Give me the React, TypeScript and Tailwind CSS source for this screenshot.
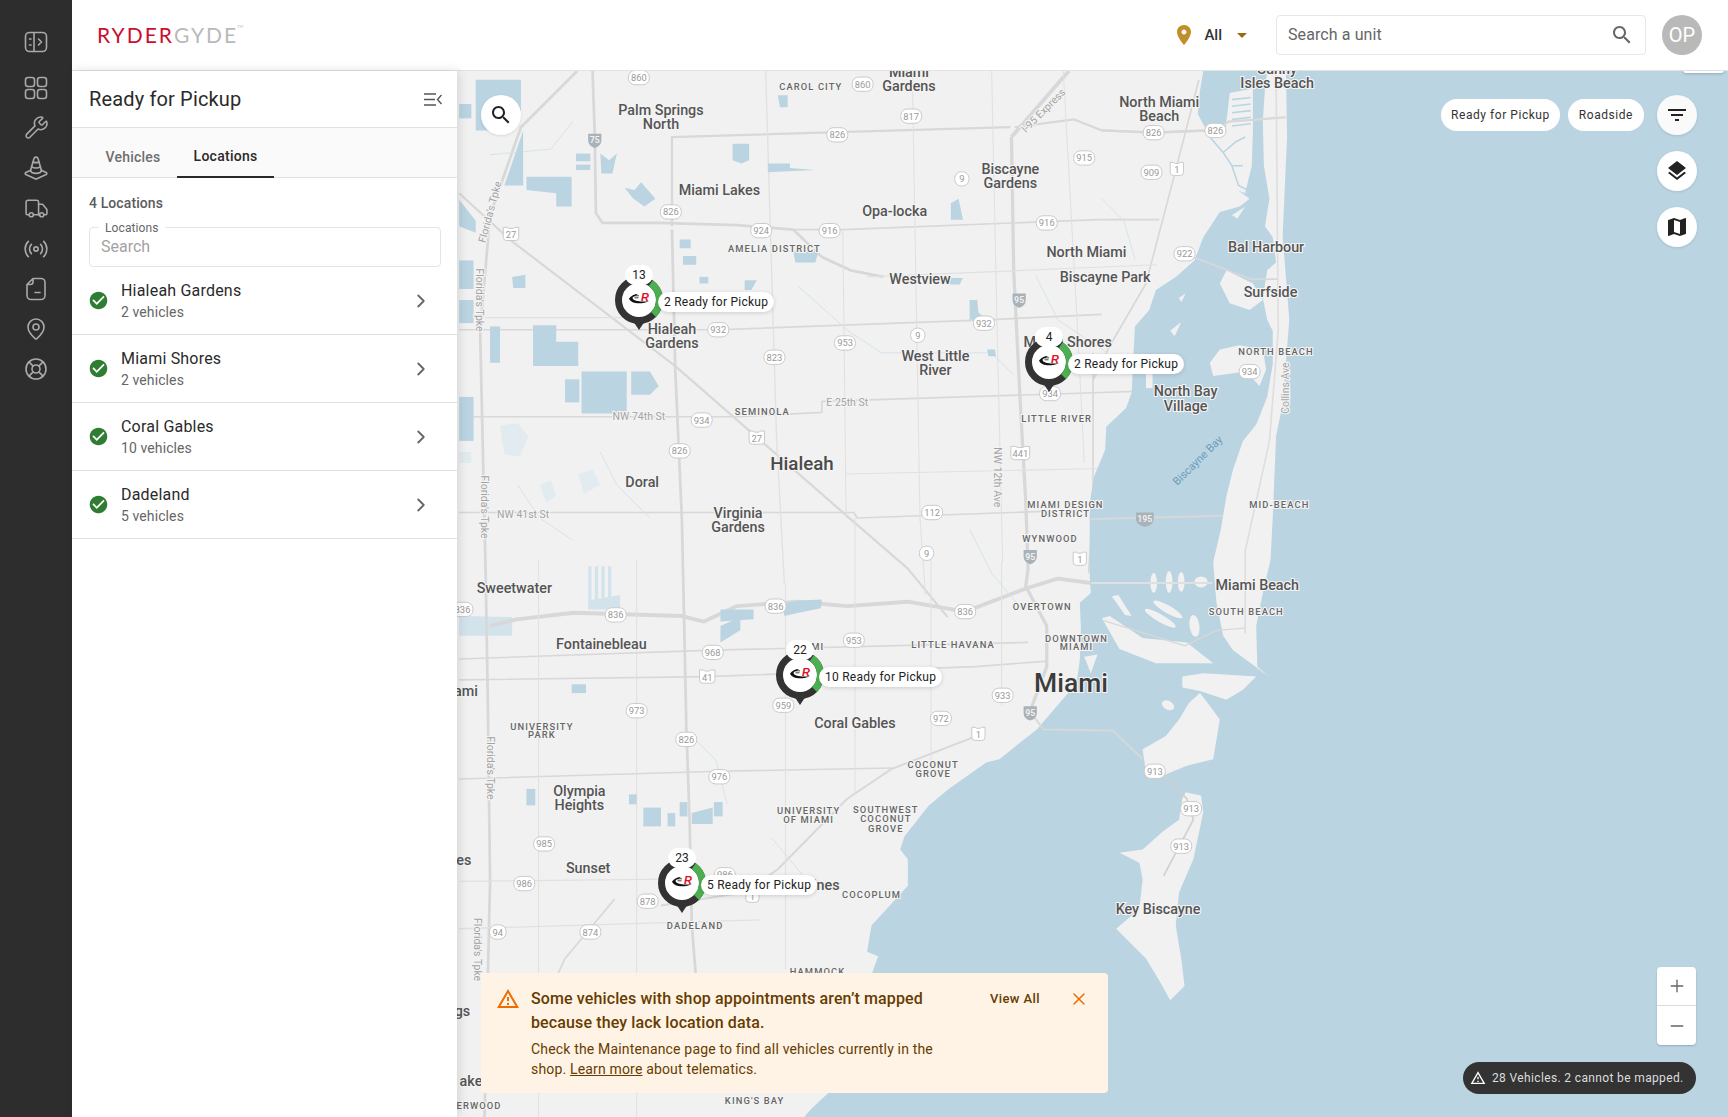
import React from 'react';
import { Wrench, TrafficCone, Truck, Radio, MapPin, LifeBuoy, ChevronRight, Plus, Minus, X } from 'lucide-react';

const SEARCH = 'M15.5 14h-.79l-.28-.27C15.41 12.59 16 11.11 16 9.5 16 5.91 13.09 3 9.5 3S3 5.91 3 9.5 5.91 16 9.5 16c1.61 0 3.09-.59 4.23-1.57l.27.28v.79l5 4.99L20.49 19l-4.99-5zm-6 0C7.01 14 5 11.99 5 9.5S7.01 5 9.5 5 14 7.01 14 9.5 11.99 14 9.5 14z';
const WARNING = 'M1 21h22L12 2 1 21zm3.47-2L12 5.99 19.53 19H4.47zM11 16h2v2h-2zm0-6h2v4h-2z';

function Glyph({ d, size = 24, className }: { d: string; size?: number; className?: string }) {
  return (
    <svg width={size} height={size} viewBox="0 0 24 24" fill="currentColor" className={className}>
      <path d={d} fillRule="evenodd" />
    </svg>
  );
}

// Rail icons lucide does not have
function PanelToggleIcon() {
  return (
    <svg width="24" height="24" viewBox="0 0 24 24" fill="none" stroke="currentColor" strokeWidth="1.6" strokeLinecap="round" strokeLinejoin="round">
      <rect x="1.5" y="2.5" width="21" height="19" rx="4" />
      <path d="M10 2.5v19M14.5 9l3 3-3 3M5.5 9h1.5M5.5 15h1.5" />
    </svg>
  );
}

function GridIcon() {
  return (
    <svg width="24" height="24" viewBox="0 0 24 24" fill="none" stroke="currentColor" strokeWidth="1.6">
      <rect x="1.5" y="1.5" width="9" height="9" rx="2.5" />
      <rect x="13.5" y="1.5" width="9" height="9" rx="2.5" />
      <rect x="1.5" y="13.5" width="9" height="9" rx="2.5" />
      <rect x="13.5" y="13.5" width="9" height="9" rx="2.5" />
    </svg>
  );
}

function NotesIcon() {
  return (
    <svg width="24" height="24" viewBox="0 0 24 24" fill="none" stroke="currentColor" strokeWidth="1.6" strokeLinecap="round" strokeLinejoin="round">
      <path d="M9 1.5h8a4 4 0 0 1 4 4v13a4 4 0 0 1-4 4H7a4 4 0 0 1-4-4V7.500zM9 1.500V5a2.500 2.500 0 0 1-2.500 2.500H3M11 15.500h5" />
    </svg>
  );
}

const railIcons = [
  { key: 'dash', node: <GridIcon />, cls: 'mt-[22px]' },
  { key: 'wrench', node: <Wrench size={25} strokeWidth={1.5} />, cls: 'mt-[15px]' },
  { key: 'cone', node: <TrafficCone size={26} strokeWidth={1.5} />, cls: 'mt-[15px]' },
  { key: 'truck', node: <Truck size={25} strokeWidth={1.5} />, cls: 'mt-[15px]' },
  { key: 'radio', node: <Radio size={26} strokeWidth={1.5} />, cls: 'mt-[15px]' },
  { key: 'notes', node: <NotesIcon />, cls: 'mt-[15px]' },
  { key: 'pin', node: <MapPin size={24} strokeWidth={1.6} />, cls: 'mt-[16px]' },
  { key: 'help', node: <LifeBuoy size={24} strokeWidth={1.6} />, cls: 'mt-[16px]' },
];

const locations = [
  { name: 'Hialeah Gardens', count: '2 vehicles' },
  { name: 'Miami Shores', count: '2 vehicles' },
  { name: 'Coral Gables', count: '10 vehicles' },
  { name: 'Dadeland', count: '5 vehicles' },
];

// Map geometry, all in the svg's own 1153x950 space
const bay = '1092,64 1089,82 1087,103 1095,118 1107,136 1119,157 1123,172 1134,180 1125,187 1107,192 1092,215 1084,236 1067,251 1049,263 1043,281 1030,296 1028,335 1027,356 1022,370 1004,387 1003,408 993,432 989,456 989,516 989,523 990,538 980,547 981,571 980,599 977,620 959,641 941,662 922,677 907,689 895,692 861,716 843,731 821,759 817,771 824,780 824,804 791,840 787,864 797,868 775,930 752,992 736,1007 730,1014 1568,1014 1568,64';

const islands = [
  '1167,64 1168,124 1164,214 1170,290 1164,366 1158,396 1155,470 1153,508 1146,538 1140,568 1141,605 1153,615 1119,590 1110,577 1104,547 1101,510 1108,480 1113,450 1119,426 1128,400 1140,385 1150,360 1155,330 1155,300 1150,290 1146,270 1150,245 1158,238 1155,215 1148,205 1152,180 1147,150 1146,110 1148,80 1150,64',
  '1092,122 1112,118 1116,84 1137,80 1137,118 1136,150 1130,175 1122,172 1107,136',
  '1107,257 1113,245 1137,257 1146,272 1134,281 1116,275',
  '1098,329 1107,317 1125,313 1146,317 1149,335 1143,350 1131,337 1101,341',
  '1000,561 1007,559 1037,579 1077,583 1101,602 1049,602 1016,589',
  '1009,541 1015,540 1027,559 1021,558',
  '984,596 996,594 990,611',
  '1073,614 1092,611 1140,614 1128,626 1113,635 1089,627 1073,624',
  '1089,629 1096,638 1107,653 1104,671 1101,689 1077,695 1055,704 1040,701 1037,680 1058,668 1070,653 1079,638',
  '1076,719 1090,722 1092,737 1083,780 1070,810 1067,840 1072,870 1075,895 1062,908 1052,890 1040,870 1013,843 1034,825 1037,798 1034,783 1016,774 1037,771 1055,755 1070,744 1073,725',
  '1040,330 1046,330 1046,352 1040,352',
  '1062,300 1072,292 1066,305',
  '1070,270 1076,266 1072,274',
  '1118,195 1130,187 1123,198',
];

const islets: [number, number, number, number, number][] = [
  [1047, 529, 3, 9, 0],
  [1061, 528, 3, 10, 0],
  [1072, 528, 3, 9, 0],
  [1090, 528, 6, 5, 0],
  [1060, 553, 15, 3.5, 30],
  [1053, 561, 16, 3.5, 30],
  [1084, 568, 4.5, 10, -8],
  [1060, 640, 6, 4, 30],
];

const ponds = [
  '432,72 473,72 473,100 455,118 432,118',
  '417,94 428,94 428,107 417,107',
  '475,118 475,168 458,168',
  '478,160 503,160 519,160 519,187 505,187 505,175 478,172',
  '417,181 432,200 432,211 417,205',
  '417,236 430,236 430,262 417,262',
  '417,272 430,272 430,293 417,293',
  '465,251 477,249 477,261 466,261',
  '445,296 454,296 454,329 445,329',
  '484,295 505,295 505,310 525,310 525,332 484,332',
  '528,337 569,337 569,375 528,375',
  '573,337 590,337 598,350 590,358 573,358',
  '513,344 526,344 526,365 513,365',
  '417,360 430,360 430,400 417,400',
  '523,139 536,139 536,146 523,146',
  '523,149 536,149 536,154 523,154',
  '545,139 553,145 560,139 556,157 546,157',
  '567,170 576,172 582,165 595,180 585,187 575,180',
  '665,130 680,130 680,145 673,148 665,145',
  '697,148 717,148 717,152 740,154 697,156',
  '706,86 715,86 715,97 708,97',
  '720,228 743,228 740,238 722,238',
  '863,184 870,180 874,199 863,199',
  '880,272 887,272 888,283 895,290 880,290',
  '896,317 903,317 904,323 897,323',
  '861,252 874,252 871,258 862,258',
  '617,217 627,217 627,225 617,225',
  '620,232 632,232 632,240 620,240',
  '635,251 643,251 643,257 635,257',
  '676,254 687,254 682,263 676,263',
  '654,553 684,553 684,562 654,564',
  '654,568 672,560 672,572 654,583',
  '710,548 725,545 746,544 745,552 725,556 712,559',
  '584,733 600,733 600,750 584,750',
  '606,738 613,738 613,750 606,750',
  '617,728 624,728 624,741 617,741',
  '628,738 647,733 647,748 628,748',
  '648,728 656,728 656,741 648,741',
  '571,721 578,721 578,730 571,730',
  '478,716 486,716 486,731 478,731',
  '519,621 532,621 532,629 519,629',
];

const canalBlocks = [
  '417,559 465,560 465,577 417,577',
  '534,514 537,514 537,545 534,545',
  '540,514 543,514 543,545 540,545',
  '546,514 549,514 549,545 546,545',
  '552,514 555,514 555,545 552,545',
  '534,545 563,540 563,553 534,553',
];

const faintWater = [
  '454,386 470,384 480,396 472,414 458,412',
  '417,410 428,410 428,420 417,420',
  '490,440 500,436 505,450 496,456',
  '525,430 538,426 545,440 530,448',
];

const roads: [string, number][] = [
  ['524,64 473,115 445,195 436,300 441,520 443,640 445,800 440,1014', 2.5],
  ['417,175 464,218 613,332 772,471 824,516 860,560', 2],
  ['538,64 540,124 541,193 547,202 598,202 669,204 720,208 746,233 772,245 802,251', 2.5],
  ['610,208 613,335 619,471 621,562 623,659 626,744 628,840 632,890', 2.5],
  ['610,205 610,124 917,115', 2],
  ['921,115 975,108 1000,118 1047,120 1092,118', 2],
  ['918,124 920,245 926,366 931,456 933,516 931,532 950,568 950,605 935,645', 3],
  ['918,124 970,64', 3.5],
  ['1088,72 1067,154 1040,257 1007,314 992,345', 1.5],
  ['992,320 992,456 988,520', 1.5],
  ['417,299 652,299 895,290 1000,285', 1.5],
  ['720,208 765,208 997,199 1052,199', 1.5],
  ['417,378 670,378 746,374 746,364 1000,356 1030,355', 1.5],
  ['417,465 775,465 778,470 1000,462', 1.5],
  ['445,568 469,562 521,556 619,559 639,564 669,550 724,546 769,550 824,546 876,555 931,534 960,525 990,529', 3.5],
  ['417,598 648,590 933,583', 1.5],
  ['417,617 642,614 885,605 950,600', 1.5],
  ['417,707 653,700 810,697', 1.5],
  ['889,667 809,698 769,725 706,789 676,810 600,822', 1.8],
  ['558,816 513,870 490,920', 1.5],
  ['417,800 700,797', 1.2],
  ['417,843 690,835', 1.2],
  ['768,430 1000,425', 1],
  ['440,288 565,288', 1],
  ['787,251 1050,240', 1],
  ['489,508 489,1014', 1],
  ['578,508 578,1014', 1],
  ['713,530 713,880', 1],
  ['776,470 776,720', 1],
  ['845,505 845,690', 1],
  ['909,510 909,640', 1],
  ['695,64 705,400 712,530', 1.2],
  ['765,208 768,470', 1],
  ['828,64 835,470 840,540', 1],
  ['900,64 905,300 910,510', 1],
  ['965,64 978,300 984,420', 1],
];

const canals = [
  '445,140 500,135 520,110',
  '725,260 770,300 800,320 900,320 920,340',
  '940,250 960,290 1005,320',
  '880,480 900,520 925,550',
  '620,660 650,690 660,730',
  '700,760 725,790 740,810',
  '1000,180 1020,200 1030,235',
  '545,410 560,440 590,470',
  '470,440 490,470 520,490',
];

// Waterways that cross the islands north of Bal Harbour
const veins = [
  '1118,90 1135,88', '1118,96 1135,94', '1118,102 1135,100', '1118,108 1135,106', '1118,114 1135,112',
  '1098,124 1110,138 1122,128 1130,124',
  '1110,138 1118,150 1128,150',
  '1118,150 1124,168 1132,172',
];

type MapLabel = { t: string; x: number; y: number; k: 'city' | 'hood' | 'road'; r?: number };

const labels: MapLabel[] = [
  { t: 'Miami', x: 825, y: 65, k: 'city' },
  { t: 'Gardens', x: 825, y: 78, k: 'city' },
  { t: 'CAROL CITY', x: 736, y: 78, k: 'hood' },
  { t: 'Palm Springs', x: 600, y: 99, k: 'city' },
  { t: 'North', x: 600, y: 112, k: 'city' },
  { t: 'North Miami', x: 1052, y: 92, k: 'city' },
  { t: 'Beach', x: 1052, y: 105, k: 'city' },
  { t: 'Sunny', x: 1159, y: 62, k: 'city' },
  { t: 'Isles Beach', x: 1159, y: 75, k: 'city' },
  { t: 'Miami Lakes', x: 653, y: 172, k: 'city' },
  { t: 'Biscayne', x: 917, y: 153, k: 'city' },
  { t: 'Gardens', x: 917, y: 166, k: 'city' },
  { t: 'Opa-locka', x: 812, y: 191, k: 'city' },
  { t: 'AMELIA DISTRICT', x: 703, y: 225, k: 'hood' },
  { t: 'North Miami', x: 986, y: 228, k: 'city' },
  { t: 'Bal Harbour', x: 1149, y: 224, k: 'city' },
  { t: 'Westview', x: 835, y: 253, k: 'city' },
  { t: 'Biscayne Park', x: 1003, y: 251, k: 'city' },
  { t: 'Surfside', x: 1153, y: 265, k: 'city' },
  { t: 'Hialeah', x: 610, y: 298, k: 'city' },
  { t: 'Gardens', x: 610, y: 311, k: 'city' },
  { t: 'West Little', x: 849, y: 323, k: 'city' },
  { t: 'River', x: 849, y: 336, k: 'city' },
  { t: 'Miami Shores', x: 969, y: 310, k: 'city' },
  { t: 'NORTH BEACH', x: 1158, y: 319, k: 'hood' },
  { t: 'North Bay', x: 1076, y: 355, k: 'city' },
  { t: 'Village', x: 1076, y: 368, k: 'city' },
  { t: 'SEMINOLA', x: 692, y: 373, k: 'hood' },
  { t: 'LITTLE RIVER', x: 959, y: 380, k: 'hood' },
  { t: 'Doral', x: 583, y: 437, k: 'city' },
  { t: 'Virginia', x: 670, y: 465, k: 'city' },
  { t: 'Gardens', x: 670, y: 478, k: 'city' },
  { t: 'MIAMI DESIGN', x: 967, y: 458, k: 'hood' },
  { t: 'DISTRICT', x: 967, y: 466, k: 'hood' },
  { t: 'MID-BEACH', x: 1161, y: 458, k: 'hood' },
  { t: 'WYNWOOD', x: 953, y: 489, k: 'hood' },
  { t: 'Miami Beach', x: 1141, y: 531, k: 'city' },
  { t: 'Sweetwater', x: 467, y: 534, k: 'city' },
  { t: 'OVERTOWN', x: 946, y: 550, k: 'hood' },
  { t: 'SOUTH BEACH', x: 1131, y: 555, k: 'hood' },
  { t: 'Fontainebleau', x: 546, y: 584, k: 'city' },
  { t: 'MIAMI', x: 733, y: 587, k: 'hood' },
  { t: 'LITTLE HAVANA', x: 865, y: 585, k: 'hood' },
  { t: 'DOWNTOWN', x: 977, y: 579, k: 'hood' },
  { t: 'MIAMI', x: 977, y: 587, k: 'hood' },
  { t: 'Coral Gables', x: 776, y: 656, k: 'city' },
  { t: 'UNIVERSITY', x: 492, y: 659, k: 'hood' },
  { t: 'PARK', x: 492, y: 667, k: 'hood' },
  { t: 'COCONUT', x: 847, y: 694, k: 'hood' },
  { t: 'GROVE', x: 847, y: 702, k: 'hood' },
  { t: 'Olympia', x: 526, y: 718, k: 'city' },
  { t: 'Heights', x: 526, y: 731, k: 'city' },
  { t: 'UNIVERSITY', x: 734, y: 736, k: 'hood' },
  { t: 'OF MIAMI', x: 734, y: 744, k: 'hood' },
  { t: 'SOUTHWEST', x: 804, y: 735, k: 'hood' },
  { t: 'COCONUT', x: 804, y: 743, k: 'hood' },
  { t: 'GROVE', x: 804, y: 752, k: 'hood' },
  { t: 'Sunset', x: 534, y: 788, k: 'city' },
  { t: 'COCOPLUM', x: 791, y: 812, k: 'hood' },
  { t: 'DADELAND', x: 631, y: 840, k: 'hood' },
  { t: 'Key Biscayne', x: 1051, y: 825, k: 'city' },
  { t: 'HAMMOCK', x: 742, y: 882, k: 'hood' },
  { t: "KING'S BAY", x: 685, y: 999, k: 'hood' },
  { t: 'ERWOOD', x: 435, y: 1004, k: 'hood' },
  { t: 'NW 74th St', x: 580, y: 378, k: 'road' },
  { t: 'E 25th St', x: 769, y: 365, k: 'road' },
  { t: 'NW 41st St', x: 475, y: 467, k: 'road' },
  { t: "Florida's Tpke", x: 445, y: 192, k: 'road', r: -75 },
  { t: "Florida's Tpke", x: 435, y: 272, k: 'road', r: 90 },
  { t: "Florida's Tpke", x: 440, y: 460, k: 'road', r: 90 },
  { t: "Florida's Tpke", x: 445, y: 697, k: 'road', r: 90 },
  { t: "Florida's Tpke", x: 434, y: 862, k: 'road', r: 90 },
  { t: 'NW 12th Ave', x: 905, y: 433, k: 'road', r: 90 },
  { t: 'Collins Ave', x: 1167, y: 352, k: 'road', r: -90 },
  { t: 'I-95 Express', x: 947, y: 100, k: 'road', r: -45 },
];

const labelCls = {
  city: "font-['Roboto',sans-serif] text-[13px] font-medium fill-[#555555]",
  hood: "font-['Roboto',sans-serif] text-[8.5px] font-medium tracking-[1px] fill-[#666666]",
  road: "font-['Roboto',sans-serif] text-[9.5px] fill-[#a3a3a3]",
};

const ovalShields: [string, number, number][] = [
  ['860', 580, 70], ['860', 783, 76], ['817', 827, 105], ['826', 760, 122], ['826', 1047, 120], ['826', 1103, 118],
  ['915', 984, 143], ['909', 1045, 156], ['9', 873, 162], ['826', 609, 192], ['924', 691, 209], ['916', 753, 209],
  ['916', 950, 202], ['922', 1075, 230], ['932', 652, 299], ['953', 767, 311], ['9', 833, 304], ['932', 893, 293],
  ['823', 703, 324], ['934', 1134, 337], ['934', 953, 357], ['934', 637, 381], ['826', 617, 409], ['112', 846, 465],
  ['9', 841, 502], ['836', 420, 553], ['836', 559, 558], ['836', 704, 550], ['836', 876, 555], ['968', 647, 592],
  ['953', 775, 581], ['973', 578, 645], ['959', 711, 640], ['933', 910, 631], ['972', 854, 652], ['826', 623, 671],
  ['976', 653, 705], ['913', 1048, 700], ['913', 1081, 734], ['913', 1072, 768], ['985', 494, 766], ['986', 476, 802],
  ['878', 588, 818], ['986', 658, 794], ['94', 452, 846], ['874', 536, 846],
];

const usShields: [string, number, number][] = [
  ['27', 464, 212], ['27', 687, 397], ['1', 1068, 153], ['441', 926, 411], ['1', 980, 507], ['41', 642, 614], ['1', 888, 666], ['1', 683, 813],
];

const interstates: [string, number, number][] = [
  ['75', 540, 127], ['95', 925, 272], ['195', 1039, 471], ['95', 935, 505], ['95', 935, 647],
];

function MapCanvas() {
  const haloCls = '[paint-order:stroke] stroke-[#f4f4f4] stroke-[2px]';
  return (
    <svg viewBox="415 64 1153 950" preserveAspectRatio="none" className="absolute inset-0 h-full w-full">
      <rect x="415" y="64" width="1153" height="950" fill="#f1f1f1" />
      {faintWater.map((pts, i) => (
        <polygon key={`f-${i}`} points={pts} fill="#e1ebf0" />
      ))}
      {canalBlocks.map((pts, i) => (
        <polygon key={`w-${i}`} points={pts} fill="#d3e3ec" />
      ))}
      {roads.map(([pts, w], i) => (
        <polyline key={`r-${i}`} points={pts} fill="none" stroke={w > 1.4 ? '#d8d8d8' : '#e1e1e1'} strokeWidth={w} strokeLinejoin="round" />
      ))}
      {canals.map((pts, i) => (
        <polyline key={`c-${i}`} points={pts} fill="none" stroke="#d3e3ec" strokeWidth="0.9" />
      ))}
      {ponds.map((pts, i) => (
        <polygon key={`p-${i}`} points={pts} fill="#bbd4e2" />
      ))}
      <polygon points={bay} fill="#bbd4e2" />
      {islands.map((pts, i) => (
        <polygon key={`i-${i}`} points={pts} fill="#f1f1f1" />
      ))}
      {islets.map(([cx, cy, rx, ry, rot], i) => (
        <ellipse key={`e-${i}`} cx={cx} cy={cy} rx={rx} ry={ry} fill="#f1f1f1" transform={`rotate(${rot} ${cx} ${cy})`} />
      ))}
      {veins.map((pts, i) => (
        <polyline key={`v-${i}`} points={pts} fill="none" stroke="#bbd4e2" strokeWidth="1.4" />
      ))}
      <polyline points="1000,118 1047,120 1103,118 1115,110 1167,106" fill="none" stroke="#d8d8d8" strokeWidth="2" />
      <polyline points="990,471 1110,468" fill="none" stroke="#d8d8d8" strokeWidth="1.8" />
      <polyline points="990,529 1100,529" fill="none" stroke="#e0e0e0" strokeWidth="2" />
      <polyline points="935,646 947,662 1010,663 1037,689" fill="none" stroke="#d8d8d8" strokeWidth="1.6" />
      <polyline points="1057,704 1077,725 1083,744 1056,795" fill="none" stroke="#d0d0d0" strokeWidth="1.5" />
      <polyline points="1075,230 1135,253 1160,253" fill="none" stroke="#d8d8d8" strokeWidth="1.5" />
      <polyline points="1001,563 1075,586 1104,572 1130,570" fill="none" stroke="#d8d8d8" strokeWidth="1.2" />
      <polyline points="1158,64 1160,300 1152,400 1130,500 1130,575" fill="none" stroke="#dedede" strokeWidth="1.5" />

      {labels.map((l, i) => (
        <text
          key={`l-${i}`}
          x={l.x}
          y={l.y}
          textAnchor="middle"
          dominantBaseline="central"
          transform={l.r ? `rotate(${l.r} ${l.x} ${l.y})` : undefined}
          className={`${labelCls[l.k]} ${haloCls}`}
        >
          {l.t}
        </text>
      ))}
      <text x="728" y="421" textAnchor="middle" dominantBaseline="central" className={`font-['Roboto',sans-serif] text-[17px] font-medium fill-[#4a4a4a] ${haloCls}`}>Hialeah</text>
      <text x="972" y="619" textAnchor="middle" dominantBaseline="central" className={`font-['Roboto',sans-serif] text-[24px] font-medium fill-[#3c3c3c] ${haloCls}`}>Miami</text>
      <text x="1087" y="418" textAnchor="middle" dominantBaseline="central" transform="rotate(-45 1087 418)" className="font-['Roboto',sans-serif] text-[10px] fill-[#6d9cb8]">Biscayne Bay</text>
      <text x="434" y="627" textAnchor="end" dominantBaseline="central" className={`${labelCls.city} ${haloCls}`}>ami</text>
      <text x="428" y="781" textAnchor="end" dominantBaseline="central" className={`${labelCls.city} ${haloCls}`}>es</text>
      <text x="427" y="918" textAnchor="end" dominantBaseline="central" className={`${labelCls.city} ${haloCls}`}>ngs</text>
      <text x="438" y="981" textAnchor="end" dominantBaseline="central" className={`${labelCls.city} ${haloCls}`}>ake</text>
      <text x="762" y="803" textAnchor="end" dominantBaseline="central" className={`${labelCls.city} ${haloCls}`}>Pines</text>

      {ovalShields.map(([n, x, y], i) => {
        const w = n.length === 1 ? 13 : n.length === 2 ? 15 : 19;
        return (
          <g key={`o-${i}`}>
            <rect x={x - w / 2} y={y - 6.5} width={w} height="13" rx="6" fill="#ffffff" stroke="#c9c9c9" strokeWidth="0.9" />
            <text x={x} y={y} textAnchor="middle" dominantBaseline="central" className="font-['Roboto',sans-serif] text-[8.5px] fill-[#9a9a9a]">{n}</text>
          </g>
        );
      })}
      {usShields.map(([n, x, y], i) => {
        const w = n.length === 3 ? 17 : n.length === 2 ? 14 : 12;
        return (
          <g key={`u-${i}`}>
            <path d={`M${x - w / 2} ${y - 6}h${w / 4}l${w / 8} 1l${w / 4} 0l${w / 8} -1h${w / 4}v9q0 3 -3 3h${-(w - 6)}q-3 0 -3 -3z`} fill="#ffffff" stroke="#c9c9c9" strokeWidth="0.9" />
            <text x={x} y={y + 0.5} textAnchor="middle" dominantBaseline="central" className="font-['Roboto',sans-serif] text-[8.5px] fill-[#9a9a9a]">{n}</text>
          </g>
        );
      })}
      {interstates.map(([n, x, y], i) => {
        const w = n.length === 3 ? 16 : 12;
        return (
          <g key={`h-${i}`}>
            <path d={`M${x - w / 2} ${y - 6}h${w}v6q0 5 -${w / 2} 7q-${w / 2} -2 -${w / 2} -7z`} fill="#a9b2b8" />
            <text x={x} y={y} textAnchor="middle" dominantBaseline="central" className="font-['Roboto',sans-serif] text-[8px] font-bold fill-[#eeeeee]">{n}</text>
          </g>
        );
      })}
    </svg>
  );
}

function Marker({ count, label, className }: { count: string; label: string; className: string }) {
  return (
    <div className={`absolute h-[64px] w-[56px] ${className}`}>
      <svg width="56" height="64" viewBox="0 0 56 64" className="absolute left-0 top-0">
        <path d="M20 50h16l-8 12z" fill="#333333" />
        <circle cx="28" cy="32" r="20.5" fill="#ffffff" stroke="#333333" strokeWidth="7" />
        <path d="M39.76 15.21A20.5 20.5 0 0 1 42.5 46.5" fill="none" stroke="#4caf50" strokeWidth="7" />
        <path d="M18 30.500c2-3 5.500-4.500 9-4.600l-2.600 2.100c-2.300.3-3.200 1.300-2.700 2.500 1 2.800 9 3.700 16.300 2.500-5.500 3-17.500 4-20-2.500z" fill="#111111" />
        <path d="M22 27.800h6M23.500 29.800h4" stroke="#111111" strokeWidth="0.8" />
        <text x="34" y="33" textAnchor="middle" className="font-['Liberation_Sans',sans-serif] text-[11px] font-bold italic fill-[#e0102a]">R</text>
      </svg>
      <div className="absolute left-[14px] top-[-3px] flex h-[20px] w-[28px] items-center justify-center rounded-full bg-white font-['Roboto',sans-serif] text-[12px] text-[#222222]">
        {count}
      </div>
      <div className="absolute left-[47px] top-[24px] flex h-[20px] items-center whitespace-nowrap rounded-full bg-white px-[6px] font-['Roboto',sans-serif] text-[12px] tracking-[0.25px] text-[#222222] shadow-[0_1px_4px_rgba(0,0,0,0.15)]">
        {label}
      </div>
    </div>
  );
}

function RoundButton({ children, bg = 'bg-white' }: { children: React.ReactNode; bg?: string }) {
  return (
    <button className={`flex h-[40px] w-[40px] items-center justify-center rounded-full text-[#222222] shadow-[0_1px_3px_rgba(0,0,0,0.1)] ${bg}`}>
      {children}
    </button>
  );
}

export default function App() {
  return (
    <div className="flex h-[1117px] w-[1728px] overflow-hidden bg-white font-['Roboto',sans-serif] text-[#2a2a2a]">
      {/* Icon rail */}
      <aside className="flex w-[72px] flex-none flex-col items-center bg-[#2d2d2d] pt-[30px] text-[#a9a9a9]">
        <PanelToggleIcon />
        {railIcons.map((icon) => (
          <div key={icon.key} className={icon.cls}>{icon.node}</div>
        ))}
      </aside>

      <div className="flex min-w-0 flex-1 flex-col">
        {/* Top bar */}
        <header className="flex h-[71px] flex-none items-center border-b border-[#e2e2e2] bg-white">
          <div className="ml-[25px] mt-[-2px] flex items-start font-['Lato',sans-serif] text-[21px] leading-none tracking-[2px]">
            <span className="text-[#c8102e]">RYDER</span>
            <span className="text-[#b9b9b9]">GYDE</span>
            <span className="ml-[-1px] mt-[1px] text-[4px] tracking-normal text-[#b9b9b9]">TM</span>
          </div>
          <div className="ml-auto flex items-center">
            <Glyph d="M12 2C8.13 2 5 5.13 5 9c0 5.25 7 13 7 13s7-7.75 7-13c0-3.87-3.13-7-7-7zm0 9.5c-1.38 0-2.5-1.12-2.5-2.5s1.12-2.5 2.5-2.5 2.5 1.12 2.5 2.5-1.12 2.5-2.5 2.5z" className="ml-[-1px] text-[#c08f2c]" />
            <span className="ml-[8px] text-[15px] font-medium text-[#333333]">All</span>
            <span className="ml-[15px] h-0 w-0 border-x-[5px] border-t-[5px] border-x-transparent border-t-[#9a6c12]" />
            <div className="ml-[29px] flex h-[40px] w-[370px] items-center justify-between rounded border border-[#e6e6e6] pl-[11px] pr-[11px]">
              <span className="text-[16px] tracking-[0.1px] text-[#666666]">Search a unit</span>
              <Glyph d={SEARCH} className="text-[#666666]" />
            </div>
            <div className="ml-[16px] mr-[26px] flex h-[40px] w-[40px] items-center justify-center rounded-full bg-[#b9b9b9] text-[20px] text-white">OP</div>
          </div>
        </header>

        <div className="flex min-h-0 flex-1">
          {/* Left panel */}
          <section className="relative z-10 flex w-[385px] flex-none flex-col bg-white shadow-[2px_0_10px_rgba(0,0,0,0.12)]">
            <div className="flex h-[57px] flex-none items-center justify-between border-b border-[#e2e2e2] pl-[17px] pr-[15px]">
              <h1 className="text-[20px] font-normal tracking-[0.15px] text-[#2a2a2a]">Ready for Pickup</h1>
              <svg width="18" height="13" viewBox="0 0 18 13" fill="none" stroke="#555555" strokeWidth="1.4">
                <path d="M0 1h12M0 6.500h11M0 12h12M17.500 2 13.500 6.500l4 4.500" />
              </svg>
            </div>
            <div className="flex h-[50px] flex-none items-end border-b border-[#e2e2e2] bg-[#fafafa] pl-[17px] text-[14px] font-medium tracking-[0.25px]">
              <div className="flex h-[49px] w-[88px] items-center justify-center pt-[9px] text-[#6e6e6e]">Vehicles</div>
              <div className="mb-[-1px] flex h-[50px] w-[97px] items-center justify-center border-b-2 border-[#2a2a2a] pt-[9px] text-[#2a2a2a]">Locations</div>
            </div>
            <div className="px-[17px]">
              <div className="mt-[16px] text-[14px] font-medium leading-[18px] tracking-[0.1px] text-[#5c5c5c]">4 Locations</div>
              <div className="relative mt-[15px] flex h-[40px] w-[352px] items-center rounded border border-[#e4e4e4] pl-[11px] text-[16px] text-[#a3a3a3]">
                Search
                <span className="absolute left-[9px] top-[-7px] bg-white px-[6px] text-[12px] leading-[14px] tracking-[0.1px] text-[#666666]">Locations</span>
              </div>
            </div>
            <ul>
              {locations.map((loc) => (
                <li key={loc.name} className="flex h-[68px] items-center border-b border-[#e2e2e2] pl-[16px] pr-[25px]">
                  <Glyph d="M12 2C6.48 2 2 6.48 2 12s4.48 10 10 10 10-4.48 10-10S17.52 2 12 2zm-2 15l-5-5 1.41-1.41L10 14.17l7.59-7.59L19 8l-9 9z" size={21} className="text-[#2e7d32]" />
                  <div className="ml-[12px] flex-1">
                    <div className="text-[16px] leading-[22px] tracking-[0.2px] text-[#2a2a2a]">{loc.name}</div>
                    <div className="text-[14px] leading-[20px] tracking-[0.1px] text-[#666666]">{loc.count}</div>
                  </div>
                  <ChevronRight size={22} strokeWidth={2} className="text-[#666666]" />
                </li>
              ))}
            </ul>
          </section>

          {/* Map */}
          <main className="relative min-w-0 flex-1 overflow-hidden">
            <MapCanvas />

            <Marker count="13" label="2 Ready for Pickup" className="left-[154px] top-[197px]" />
            <Marker count="4" label="2 Ready for Pickup" className="left-[564px] top-[259px]" />
            <Marker count="22" label="10 Ready for Pickup" className="left-[315px] top-[572px]" />
            <Marker count="23" label="5 Ready for Pickup" className="left-[197px] top-[780px]" />

            <div className="absolute left-[24px] top-[24px]">
              <RoundButton><Glyph d={SEARCH} /></RoundButton>
            </div>

            <div className="absolute right-[4px] top-[-4px] h-[6px] w-[41px] rounded-sm bg-white shadow-[0_1px_3px_rgba(0,0,0,0.2)]" />

            <div className="absolute right-[31px] top-[24px] flex flex-col items-end gap-[16px]">
              <div className="flex items-center gap-[8px]">
                <div className="flex h-[32px] items-center rounded-full bg-white px-[10px] text-[12px] tracking-[0.55px] text-[#333333]">Ready for Pickup</div>
                <div className="mr-[5px] flex h-[32px] items-center rounded-full bg-white px-[11px] text-[12px] tracking-[0.55px] text-[#333333]">Roadside</div>
                <RoundButton bg="bg-[#fafafa]"><Glyph d="M10 18h4v-2h-4v2zM3 6v2h18V6H3zm3 7h12v-2H6v2z" /></RoundButton>
              </div>
              <RoundButton><Glyph d="M11.99 18.54l-7.37-5.73L3 14.07l9 7 9-7-1.63-1.27-7.38 5.74zM12 16l7.36-5.73L21 9l-9-7-9 7 1.63 1.27L12 16z" /></RoundButton>
              <RoundButton><Glyph d="M20.5 3l-.16.03L15 5.1 9 3 3.36 4.9c-.21.07-.36.25-.36.48V20.5c0 .28.22.5.5.5l.16-.03L9 18.9l6 2.1 5.64-1.9c.21-.07.36-.25.36-.48V3.5c0-.28-.22-.5-.5-.5zM15 19l-6-2.11V5l6 2.11V19z" /></RoundButton>
            </div>

            {/* Zoom control and unmapped count */}
            <div className="absolute bottom-[23px] right-[32px] flex flex-col items-end gap-[17px]">
              <div className="flex w-[39px] flex-col rounded bg-white text-[#666666] shadow-[0_1px_2px_rgba(0,0,0,0.2)]">
                <div className="flex h-[39px] items-center justify-center border-b border-[#dcdcdc]"><Plus size={20} strokeWidth={1.6} /></div>
                <div className="flex h-[39px] items-center justify-center"><Minus size={20} strokeWidth={1.6} /></div>
              </div>
              <div className="flex h-[32px] w-[233px] items-center rounded-full bg-[#333333] pl-[7px] text-[12px] tracking-[0.36px] text-[#dddddd]">
                <Glyph d={WARNING} size={16} className="text-white" />
                <span className="ml-[6px]">28 Vehicles. 2 cannot be mapped.</span>
              </div>
            </div>

            {/* Telematics notice */}
            <div className="absolute bottom-[24px] left-[24px] flex h-[120px] w-[627px] rounded bg-[#fff3e5] pl-[15px] pt-[14px] text-[#663c00]">
              <Glyph d={WARNING} size={24} className="flex-none text-[#ef6c00]" />
              <div className="ml-[11px] w-[423px]">
                <p className="text-[16px] font-medium leading-[24px] tracking-[0.12px]">
                  Some vehicles with shop appointments aren’t mapped because they lack location data.
                </p>
                <p className="mt-[4px] text-[14px] leading-[20px] tracking-[0.17px]">
                  Check the Maintenance page to find all vehicles currently in the shop. <span className="underline">Learn more</span> about telematics.
                </p>
              </div>
              <span className="ml-[36px] mt-[3px] text-[13px] font-medium leading-[18px] tracking-[0.4px]">View All</span>
              <X size={20} strokeWidth={1.8} className="ml-[29px] mt-[2px] text-[#ef6c00]" />
            </div>
          </main>
        </div>
      </div>
    </div>
  );
}
